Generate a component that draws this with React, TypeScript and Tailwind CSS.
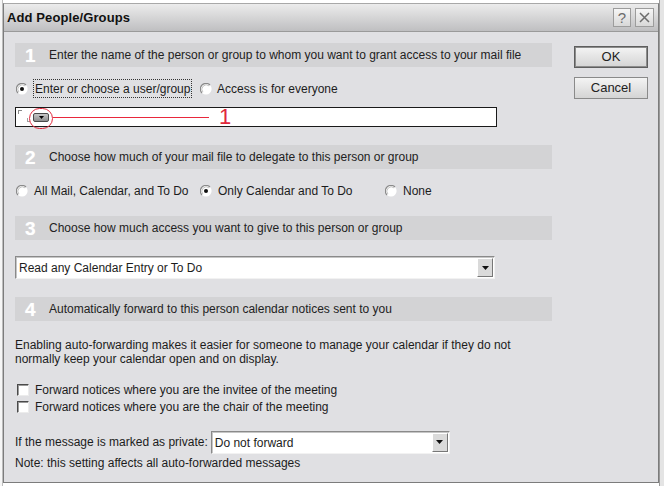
import React from "react";

const Radio = ({ checked }: { checked?: boolean }) => (
  <svg width="12" height="12" viewBox="0 0 12 12" className="shrink-0">
    <circle cx="6" cy="6" r="5.6" fill="#ffffff" />
    <path d="M2 10 A5.6 5.6 0 0 1 10 2" fill="none" stroke="#8a8a8a" strokeWidth="1.1" />
    <path d="M2.9 9.1 A4.4 4.4 0 0 1 9.1 2.9" fill="none" stroke="#c4c4c4" strokeWidth="1" />
    {checked && <circle cx="6" cy="6" r="2" fill="#111111" />}
  </svg>
);

const Check = () => (
  <span className="w-[12px] h-[12px] shrink-0 bg-white border border-t-[#4a4a4a] border-l-[#4a4a4a] border-r-[#ececec] border-b-[#ececec] shadow-[inset_1px_1px_0_#9a9a9a]" />
);

const DropBtn = () => (
  <span className="w-[16px] h-[19px] mr-[1px] shrink-0 bg-[#dadada] border border-t-white border-l-white border-b-[#777] border-r-[#777] flex items-center justify-center">
    <svg width="7" height="4" viewBox="0 0 7 4">
      <path d="M0 0h7L3.5 4z" fill="#111" />
    </svg>
  </span>
);

const Select = ({ text, w }: { text: string; w: string }) => (
  <div className={`${w} h-[23px] flex items-center bg-white border border-t-[#8a8a8a] border-l-[#8a8a8a] border-b-[#f2f2f2] border-r-[#f2f2f2] shadow-[inset_1px_1px_0_#c6c6c6]`}>
    <span className="flex-1 pl-[3px] pt-[1px]">{text}</span>
    <DropBtn />
  </div>
);

const Header = ({ n, text, mt }: { n: string; text: string; mt: string }) => (
  <div className={`${mt} h-[24px] flex items-center bg-[#d3d3d5]`}>
    <span className="w-[34px] pl-[10px] text-[19px] font-bold text-white leading-none [text-shadow:0_0_1px_#e8e8e8]">{n}</span>
    <span className="text-[#222]">{text}</span>
  </div>
);

export default function App() {
  return (
    <div className="w-[664px] h-[486px] flex bg-white text-[12px] text-[#1c1c1c] font-['Liberation_Sans',Arial,sans-serif] overflow-hidden">
      <div className="w-[3px] bg-[#f6f6f6] border-r border-[#bdbdbd]" />
      <div className="w-[656px] mt-[3px] h-[480px] flex flex-col border border-t-[#a8a8a8] border-[#7c7c7c] bg-[#e0e0e3]">
        {/* title bar */}
        <div className="h-[28px] shrink-0 flex items-center bg-linear-to-b from-[#ececec] to-[#bfbfc1] border-b border-[#9a9a9a] pl-[3px] pr-[4px]">
          <span className="font-bold text-[13px] text-[#111] tracking-[0.1px]">Add People/Groups</span>
          <div className="ml-auto flex gap-[4px]">
            <span className="w-[18px] h-[19px] border border-[#9c9c9c] bg-linear-to-b from-[#f6f6f6] to-[#d8d8d8] flex items-center justify-center text-[15px] text-[#6c6c6c] leading-none">?</span>
            <span className="w-[19px] h-[19px] border border-[#9c9c9c] bg-linear-to-b from-[#f6f6f6] to-[#d8d8d8] flex items-center justify-center">
              <svg width="11" height="11" viewBox="0 0 11 11">
                <path d="M1 1L10 10M10 1L1 10" stroke="#6c6c6c" strokeWidth="1.5" />
              </svg>
            </span>
          </div>
        </div>

        {/* body */}
        <div className="flex flex-1">
          <div className="w-[537px] ml-[11px] flex flex-col">
            <Header mt="mt-[11px]" n="1" text="Enter the name of the person or group to whom you want to grant access to your mail file" />

            <div className="mt-[12px] h-[19px] flex items-center pl-[1px]">
              <div className="w-[184px] flex items-center">
                <Radio checked />
                <span className="ml-[5px] h-[19px] px-[1px] flex items-center border border-dotted border-[#333]">Enter or choose a user/group</span>
              </div>
              <Radio />
              <span className="ml-[5px]">Access is for everyone</span>
            </div>

            <div className="mt-[9px] w-[482px] h-[20px] bg-white border border-[#1a1a1a] relative">
              <span className="absolute left-[2px] top-[2px] w-[4px] h-[4px] border-t border-l border-[#8a8a8a]" />
              <span className="absolute left-[11px] top-[10px] w-[3px] h-[4px] border-b border-l border-[#a0a0a0]" />
              <span className="absolute left-[17px] top-[5px] w-[16px] h-[9px] rounded-[2px] border border-[#4a4a4a] bg-linear-to-b from-[#c8c8c8] to-[#8e8e8e] flex items-center justify-center">
                <svg width="5" height="3" viewBox="0 0 5 3">
                  <path d="M0 0h5L2.5 3z" fill="#000" />
                </svg>
              </span>
              <span className="absolute left-[13px] top-[0px] w-[24px] h-[21px] rounded-full border border-[#e0283c]" />
              <span className="absolute left-[37px] top-[9px] w-[156px] h-[1px] bg-[#e8283c]" />
              <span className="absolute left-[203px] top-[-1px] text-[22px] leading-[20px] text-[#e0283c]">1</span>
            </div>

            <Header mt="mt-[18px]" n="2" text="Choose how much of your mail file to delegate to this person or group" />

            <div className="mt-[13px] h-[18px] flex items-center pl-[1px]">
              <div className="w-[184px] flex items-center">
                <Radio />
                <span className="ml-[6px]">All Mail, Calendar, and To Do</span>
              </div>
              <div className="w-[185px] flex items-center">
                <Radio checked />
                <span className="ml-[6px]">Only Calendar and To Do</span>
              </div>
              <Radio />
              <span className="ml-[6px]">None</span>
            </div>

            <Header mt="mt-[16px]" n="3" text="Choose how much access you want to give to this person or group" />

            <div className="mt-[16px]">
              <Select w="w-[480px]" text="Read any Calendar Entry or To Do" />
            </div>

            <Header mt="mt-[18px]" n="4" text="Automatically forward to this person calendar notices sent to you" />

            <p className="mt-[17px] leading-[14px]">
              Enabling auto-forwarding makes it easier for someone to manage your calendar if they do not
              <br />
              normally keep your calendar open and on display.
            </p>

            <div className="mt-[15px] h-[17px] flex items-center pl-[2px] gap-[6px]">
              <Check />
              <span>Forward notices where you are the invitee of the meeting</span>
            </div>
            <div className="h-[17px] flex items-center pl-[2px] gap-[6px]">
              <Check />
              <span>Forward notices where you are the chair of the meeting</span>
            </div>

            <div className="mt-[16px] h-[22px] flex items-center gap-[3px]">
              <span>If the message is marked as private:</span>
              <Select w="w-[239px]" text="Do not forward" />
            </div>
            <div className="mt-[3px] h-[14px] leading-[14px]">Note: this setting affects all auto-forwarded messages</div>
          </div>

          <div className="ml-[22px] mt-[14px] flex flex-col gap-[9px]">
            <button className="w-[74px] h-[22px] border border-[#5e5e5e] shadow-[inset_0_0_0_1px_#8c8c8c] bg-linear-to-b from-[#f4f4f4] to-[#d4d4d4] text-[13px] text-[#222]">OK</button>
            <button className="w-[74px] h-[22px] border border-[#8a8a8a] bg-linear-to-b from-[#f4f4f4] to-[#d4d4d4] text-[13px] text-[#222]">Cancel</button>
          </div>
        </div>
      </div>
      <div className="flex-1 bg-[#e4e4e4] border-l border-[#9a9a9a]" />
    </div>
  );
}
